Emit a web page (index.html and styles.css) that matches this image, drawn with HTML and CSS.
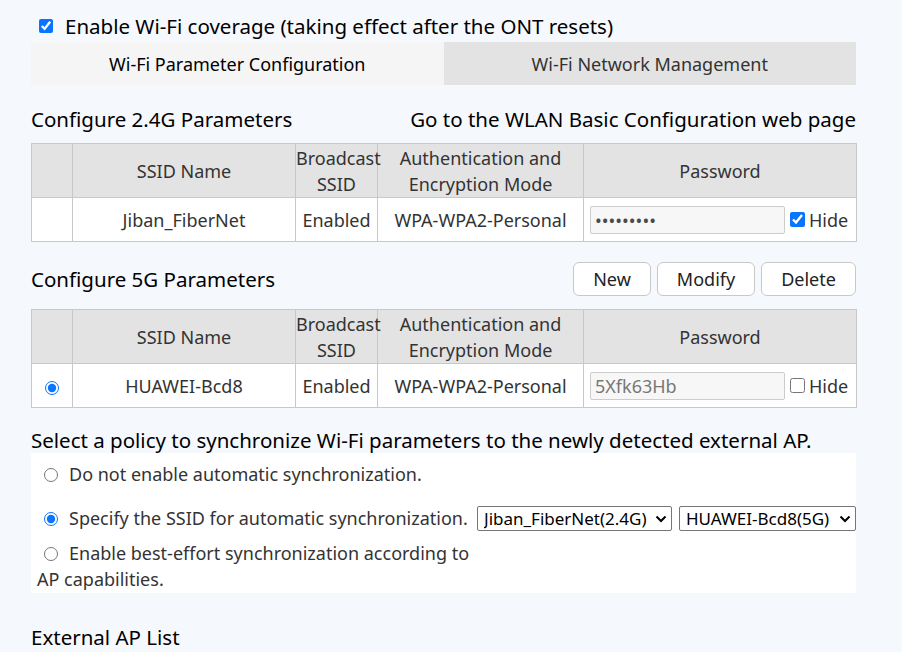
FILE: index.html
```html
<!DOCTYPE html>
<html>
<head>
<meta charset="utf-8">
<link rel="stylesheet" href="styles.css">
</head>
<body>
<div class="page">
  <label class="enable-row"><input type="checkbox" checked> Enable Wi-Fi coverage (taking effect after the ONT resets)</label>
  <div class="tabs">
    <div class="tab active">Wi-Fi Parameter Configuration</div>
    <div class="tab">Wi-Fi Network Management</div>
  </div>

  <div class="section-head">
    <span>Configure 2.4G Parameters</span>
    <span>Go to the WLAN Basic Configuration web page</span>
  </div>
  <table class="grid">
    <colgroup><col class="c1"><col class="c2"><col class="c3"><col class="c4"><col class="c5"></colgroup>
    <tr class="hdr"><th></th><th>SSID Name</th><th>Broadcast SSID</th><th>Authentication and Encryption Mode</th><th>Password</th></tr>
    <tr><td></td><td>Jiban_FiberNet</td><td>Enabled</td><td>WPA-WPA2-Personal</td>
      <td><div class="pw"><input class="pwbox dots" type="password" value="123456789"><label class="hide"><input type="checkbox" checked>Hide</label></div></td></tr>
  </table>

  <div class="section-head head5">
    <span>Configure 5G Parameters</span>
    <div class="btns"><button class="b-new">New</button><button class="b-mod">Modify</button><button class="b-del">Delete</button></div>
  </div>
  <table class="grid">
    <colgroup><col class="c1"><col class="c2"><col class="c3"><col class="c4"><col class="c5"></colgroup>
    <tr class="hdr"><th></th><th>SSID Name</th><th>Broadcast SSID</th><th>Authentication and Encryption Mode</th><th>Password</th></tr>
    <tr class="row5"><td><input type="radio" class="sel" checked></td><td>HUAWEI-Bcd8</td><td>Enabled</td><td>WPA-WPA2-Personal</td>
      <td><div class="pw"><input class="pwbox" type="text" value="5Xfk63Hb"><label class="hide"><input type="checkbox">Hide</label></div></td></tr>
  </table>

  <div class="policy-title">Select a policy to synchronize Wi-Fi parameters to the newly detected external AP.</div>
  <div class="policy">
    <div class="opt o1"><input type="radio" name="p">Do not enable automatic synchronization.</div>
    <div class="opt o2">
      <div class="o2-text"><input type="radio" name="p" checked>Specify the SSID for automatic synchronization.</div>
      <div class="selects">
        <div class="selwrap s1"><select><option>Jiban_FiberNet(2.4G)</option></select><svg class="chev" viewBox="0 0 12 8" width="12" height="8"><path d="M1.5 1.5 L6 6 L10.5 1.5" fill="none" stroke="#000" stroke-width="2"/></svg></div>
        <div class="selwrap s2"><select><option>HUAWEI-Bcd8(5G)</option></select><svg class="chev" viewBox="0 0 12 8" width="12" height="8"><path d="M1.5 1.5 L6 6 L10.5 1.5" fill="none" stroke="#000" stroke-width="2"/></svg></div>
      </div>
    </div>
    <div class="opt o3"><input type="radio" name="p">Enable best-effort synchronization according to AP capabilities.</div>
  </div>

  <div class="ext">External AP List</div>
</div>
</body>
</html>
```
FILE: styles.css
```css
html, body {
  margin: 0;
  background: #f5f8fc;
}
body {
  font-family: "Noto Sans", "Open Sans", sans-serif;
  font-size: 20.5px;
  color: #000;
}
.page {
  width: 825px;
  margin-left: 31px;
}
.enable-row {
  display: flex;
  align-items: center;
  height: 26px;
  margin-top: 13px;
  margin-left: 8px;
  gap: 12px;
}
.enable-row input {
  width: 14px;
  height: 14px;
  margin: 0;
  accent-color: #0a74ff;
}
.tabs {
  display: flex;
  margin-top: 3px;
  height: 43px;
  font-size: 18px;
}
.tab {
  flex: 1;
  display: flex;
  align-items: center;
  justify-content: center;
  background: #e3e3e3;
  color: #333;
}
.tab.active {
  background: #f5f5f5;
  color: #000;
}
.section-head {
  display: flex;
  justify-content: space-between;
  align-items: center;
  height: 32px;
  margin-top: 18px;
  margin-bottom: 8px;
}
.head5 {
  margin-top: 20px;
  height: 34px;
  margin-bottom: 13px;
}
.btns {
  display: flex;
  gap: 6px;
}
.btns button {
  font-family: inherit;
  font-size: 18px;
  color: #222;
  background: #fff;
  border: 1px solid #c8c8c8;
  border-radius: 6px;
  height: 34px;
  padding: 0;
}
.b-new { width: 78px; }
.b-mod { width: 98px; }
.b-del { width: 95px; }
.grid {
  width: 825px;
  border-collapse: collapse;
  table-layout: fixed;
  color: #333;
  background: #fff;
  font-size: 18px;
}
.c1 { width: 41px; }
.c2 { width: 223px; }
.c3 { width: 82px; }
.c4 { width: 206px; }
.c5 { width: 273px; }
.grid th, .grid td {
  border: 1px solid #c8c8c8;
  text-align: center;
  padding: 0;
  font-weight: normal;
  line-height: 26px;
}
.grid th {
  background: #e3e3e3;
  height: 53px;
}
.grid td {
  height: 43px;
}
.grid .row5 td { height: 43px; }
.pw {
  display: flex;
  align-items: center;
  padding-left: 6px;
  gap: 5px;
}
.pwbox {
  width: 195px;
  height: 28px;
  box-sizing: border-box;
  border: 1px solid #ccc;
  border-radius: 2px;
  background: #f7f7f7;
  font-family: inherit;
  font-size: 18px;
  color: #777;
  padding: 0 4px;
  margin: 0;
}
.dots {
  color: #4a4a4a;
  font-size: 18px;
  letter-spacing: 0;
}
.hide {
  display: flex;
  align-items: center;
  gap: 4px;
  color: #333;
}
.hide input {
  width: 15px;
  height: 15px;
  margin: 0;
  accent-color: #0a74ff;
}
.sel {
  width: 14px;
  height: 14px;
  margin: 0;
  vertical-align: -2px;
  accent-color: #0a74ff;
}
.policy-title {
  margin-top: 19px;
  line-height: 26px;
}
.policy {
  background: #fff;
  padding: 8px 0 0 6px;
  height: 132px;
  color: #333;
  line-height: 26px;
  font-size: 18px;
}
.opt input {
  width: 14px;
  height: 14px;
  margin: 0 11px 0 7px;
  accent-color: #0a74ff;
  vertical-align: -1px;
}
.o2 {
  display: flex;
  align-items: center;
  margin-top: 18px;
}
.o2-text {
  width: 441px;
}
.selects {
  display: flex;
  gap: 7px;
}
.selwrap {
  position: relative;
  display: flex;
}
.selwrap select {
  appearance: none;
  -webkit-appearance: none;
  font-family: inherit;
  font-size: 17px;
  color: #000;
  background: #fff;
  border: 1px solid #767676;
  border-radius: 2px;
  height: 25px;
  padding: 0 0 0 6px;
  width: 100%;
  line-height: 23px;
}
.chev {
  position: absolute;
  right: 5px;
  top: 9px;
  pointer-events: none;
}
.s1 { width: 195px; }
.s2 { width: 177px; }
.o3 {
  width: 440px;
  margin-top: 9px;
}
.ext {
  margin-top: 31px;
  line-height: 26px;
}
```
